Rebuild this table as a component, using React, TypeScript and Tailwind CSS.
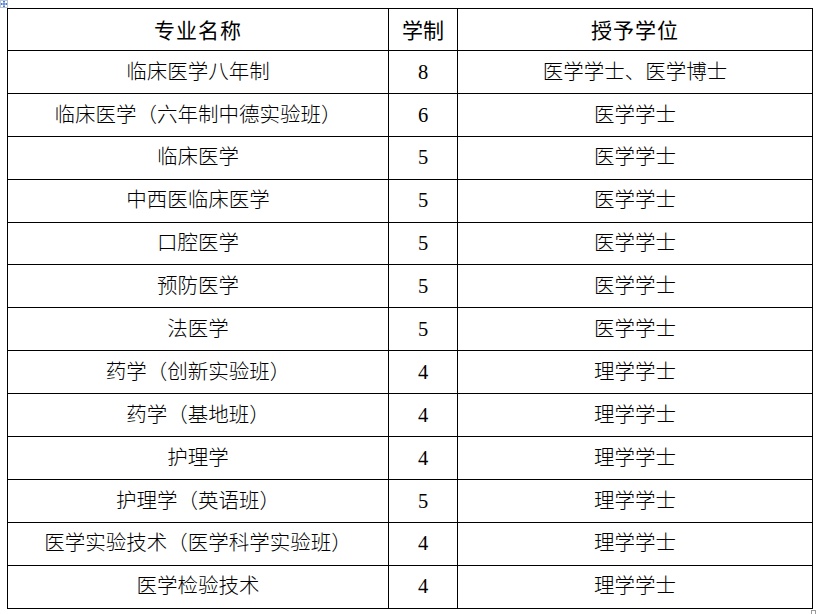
const ROWS: [string, string, string][] = [
  ["临床医学八年制", "8", "医学学士、医学博士"],
  ["临床医学（六年制中德实验班）", "6", "医学学士"],
  ["临床医学", "5", "医学学士"],
  ["中西医临床医学", "5", "医学学士"],
  ["口腔医学", "5", "医学学士"],
  ["预防医学", "5", "医学学士"],
  ["法医学", "5", "医学学士"],
  ["药学（创新实验班）", "4", "理学学士"],
  ["药学（基地班）", "4", "理学学士"],
  ["护理学", "4", "理学学士"],
  ["护理学（英语班）", "5", "理学学士"],
  ["医学实验技术（医学科学实验班）", "4", "理学学士"],
  ["医学检验技术", "4", "理学学士"],
];

function MoveHandle() {
  return (
    <div className="absolute left-0 top-0 w-[8px] h-[8px] border border-[#b8c4d6] bg-white">
      <svg width="8" height="8" viewBox="0 0 8 8" className="absolute -left-px -top-px">
        <path d="M4 1v6M1 4h6" stroke="#3b6fd4" strokeWidth="1" />
        <path d="M3 2l1-1 1 1M3 6l1 1 1-1M2 3L1 4l1 1M6 3l1 1-1 1" stroke="#3b6fd4" strokeWidth="0.8" fill="none" />
      </svg>
    </div>
  );
}

export default function App() {
  return (
    <div className="relative w-[820px] h-[614px] bg-white overflow-hidden">
      <MoveHandle />
      <div className="pt-[8px] pl-[7px]">
        <table className="w-[805px] border-collapse table-fixed text-black">
          <colgroup>
            <col className="w-[381px]" />
            <col className="w-[69px]" />
            <col className="w-[355px]" />
          </colgroup>
          <thead>
            <tr className="h-[42px] font-['Noto_Sans_CJK_SC',sans-serif] text-[21px]">
              <th className="border border-black text-center font-normal tracking-[1px]">专业名称</th>
              <th className="border border-black text-center font-normal">学制</th>
              <th className="border border-black text-center font-normal tracking-[1px]">授予学位</th>
            </tr>
          </thead>
          <tbody className="font-['Liberation_Serif','Noto_Sans_CJK_SC',serif] text-[20.5px] leading-none font-light">
            {ROWS.map(([name, years, degree]) => (
              <tr key={name} className="h-[42.9px]">
                <td className="border border-black text-center">{name}</td>
                <td className="border border-black text-center">{years}</td>
                <td className="border border-black text-center">{degree}</td>
              </tr>
            ))}
          </tbody>
        </table>
      </div>
      <div className="absolute left-[811px] top-[610px] w-[5px] h-[5px] border border-[#9a9a9a]" />
    </div>
  );
}
